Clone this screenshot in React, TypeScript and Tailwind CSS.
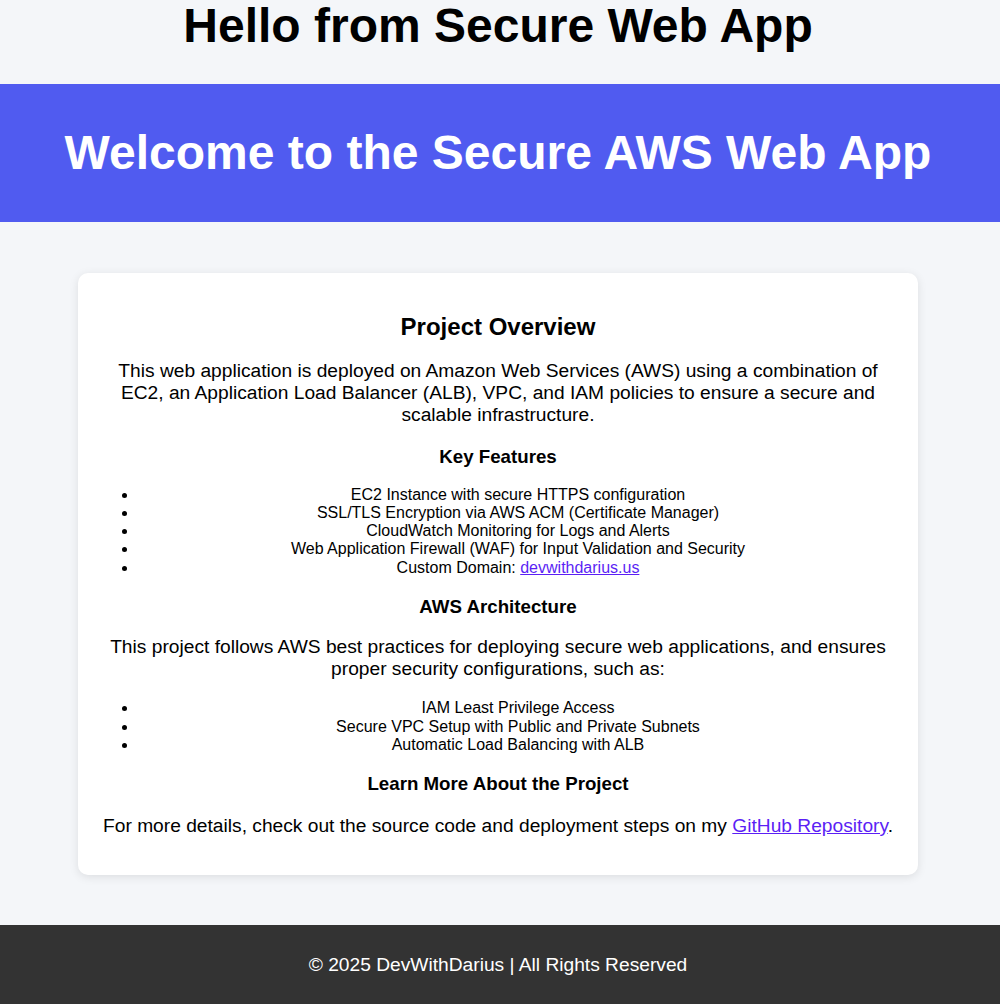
const features = [
  'EC2 Instance with secure HTTPS configuration',
  'SSL/TLS Encryption via AWS ACM (Certificate Manager)',
  'CloudWatch Monitoring for Logs and Alerts',
  'Web Application Firewall (WAF) for Input Validation and Security',
];

const practices = [
  'IAM Least Privilege Access',
  'Secure VPC Setup with Public and Private Subnets',
  'Automatic Load Balancing with ALB',
];

export default function App() {
  return (
    <div className="min-h-screen bg-[#f4f6f9] text-[16px] text-black font-['Liberation_Sans',Arial,sans-serif]">
      <h1 className="pr-1 text-center text-[48px] font-bold leading-[52px] mb-[32px]">
        Hello from Secure Web App
      </h1>

      <header className="bg-[#505bf0] py-[41px] pr-1 text-center text-white">
        <h1 className="text-[48px] font-bold leading-[56px]">Welcome to the Secure AWS Web App</h1>
      </header>

      <main className="pr-1 pt-[51px] pb-[50px]">
        <section className="mx-auto w-[840px] rounded-[10px] bg-white p-5 text-center shadow-[0_2px_10px_rgba(0,0,0,0.1)]">
          <h2 className="my-[19.92px] text-[24px] font-bold leading-[27.6px]">Project Overview</h2>
          <p className="my-[19.2px] text-[19.2px] leading-[22px]">
            This web application is deployed on Amazon Web Services (AWS) using a combination of
            EC2, an Application Load Balancer (ALB), VPC, and IAM policies to ensure a secure and
            scalable infrastructure.
          </p>

          <h3 className="my-[18.72px] text-[18.72px] font-bold leading-[21.5px]">Key Features</h3>
          <ul className="my-4 list-disc pl-10 leading-[18.2px]">
            {features.map((f) => (
              <li key={f}>{f}</li>
            ))}
            <li>
              Custom Domain:{' '}
              <a href="#" className="text-[#5b1ff5] underline">
                devwithdarius.us
              </a>
            </li>
          </ul>

          <h3 className="my-[18.72px] text-[18.72px] font-bold leading-[21.5px]">AWS Architecture</h3>
          <p className="my-[19.2px] text-[19.2px] leading-[22px]">
            This project follows AWS best practices for deploying secure web applications, and ensures
            proper security configurations, such as:
          </p>
          <ul className="my-4 list-disc pl-10 leading-[18.2px]">
            {practices.map((p) => (
              <li key={p}>{p}</li>
            ))}
          </ul>

          <h3 className="my-[18.72px] text-[18.72px] font-bold leading-[21.5px]">
            Learn More About the Project
          </h3>
          <p className="mt-[20.5px] mb-[18px] text-[19.2px] leading-[22px]">
            For more details, check out the source code and deployment steps on my{' '}
            <a href="#" className="text-[#5b1ff5] underline">
              GitHub Repository
            </a>
            .
          </p>
        </section>
      </main>

      <footer className="bg-[#333333] py-[29px] pr-1 text-center text-[19.2px] leading-[22px] text-white">
        <p>&copy; 2025 DevWithDarius | All Rights Reserved</p>
      </footer>
    </div>
  );
}
